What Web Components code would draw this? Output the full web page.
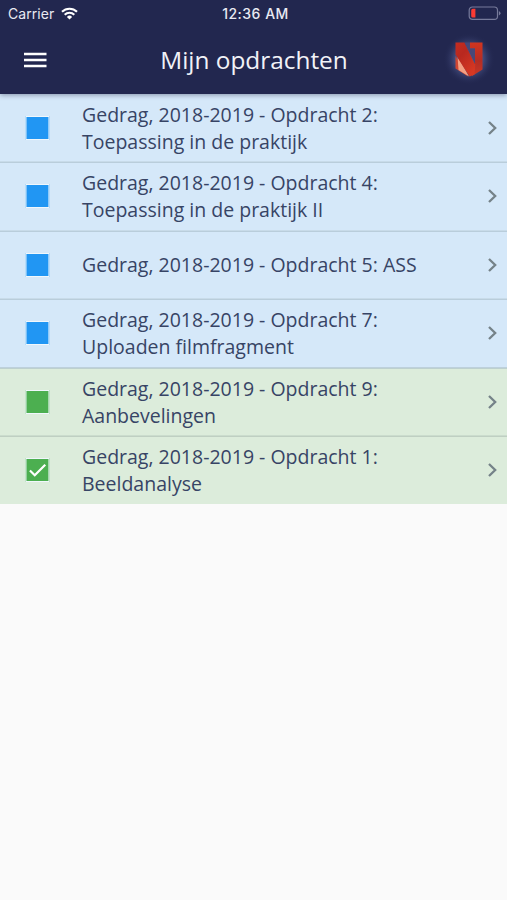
<!DOCTYPE html>
<html lang="nl">
<head>
<meta charset="utf-8">
<title>Mijn opdrachten</title>
<style>
html,body{margin:0;height:100%;background:#fafafa}
</style>
</head>
<body>
<assignments-app></assignments-app>
<script>
const define = (name, html) => {
  const tpl = document.createElement('template');
  tpl.innerHTML = html;
  customElements.define(name, class extends HTMLElement {
    constructor() {
      super();
      this.attachShadow({mode: 'open'}).append(tpl.content.cloneNode(true));
    }
  });
};

define('status-bar', `
<style>
:host{display:grid;grid-template-columns:1fr auto 1fr;align-items:center;height:27px;padding:1px 6px 0 8px;box-sizing:border-box;color:#e9eaf2;font:14px/26px Inter,sans-serif}
.left{display:flex;align-items:center;gap:7px}
.carrier{font-size:14px;letter-spacing:.05px}
.time{font-weight:500;font-size:14px;letter-spacing:.5px;padding-left:2px}
.battery{justify-self:end}
svg{display:block}
.left svg{margin-top:-2px}
.battery{margin-top:-1px}
</style>
<div class="left"><span class="carrier">Carrier</span>
<svg width="17" height="13" viewBox="0 0 17 13" fill="none" stroke="#fff" stroke-width="2.1"><path d="M1 4.8a10.7 10.7 0 0 1 15 0M3.7 7.7a6.8 6.8 0 0 1 9.6 0"/><path d="M8.5 12.5 5.9 9.9a3.7 3.7 0 0 1 5.2 0z" fill="#fff" stroke="none"/></svg></div>
<span class="time">12:36 AM</span>
<svg class="battery" width="33" height="15" viewBox="0 0 33 15"><rect x="1.2" y="1" width="28.3" height="12.4" rx="3.2" fill="none" stroke="#777b9b" stroke-width="1.2"/><path d="M4.8 2.8H7.4v8.8H4.8A1.6 1.6 0 0 1 3.2 10V4.4A1.6 1.6 0 0 1 4.8 2.8z" fill="#fa3a33"/><path d="M30.9 5q1.6.8 1.6 2.2t-1.6 2.2z" fill="#777b9b"/></svg>`);

define('brand-logo', `
<style>:host{display:block;width:66px;height:66px}svg{display:block}</style>
<svg width="66" height="66" viewBox="0 0 66 66">
<defs>
<radialGradient id="halo"><stop offset="0" stop-color="#66719f" stop-opacity=".95"/><stop offset=".5" stop-color="#59649a" stop-opacity=".7"/><stop offset="1" stop-color="#222750" stop-opacity="0"/></radialGradient>
<linearGradient id="band" x1="0" y1="0" x2=".6" y2="1"><stop offset="0" stop-color="#c52c20"/><stop offset=".4" stop-color="#b8281f"/><stop offset="1" stop-color="#d63823"/></linearGradient>
<linearGradient id="side" x1="0" y1="0" x2="0" y2="1"><stop offset="0" stop-color="#d2351f"/><stop offset=".55" stop-color="#b42d24"/><stop offset="1" stop-color="#c93826"/></linearGradient>
</defs>
<circle cx="34" cy="32" r="26" fill="url(#halo)"/>
<path d="M20.5 29 33 49.5 20.5 41.5z" fill="#cf4632"/>
<path d="M22.5 29 34 49.5 23.5 43z" fill="#f3a083"/>
<path d="M35 15.5H47.5V42.5L37 49V36H40V21.5H35z" fill="url(#side)"/>
<path d="M20.5 15.5H29.5L40.3 37.5 39.5 47.5 34.5 49.5 20.5 27.5z" fill="url(#band)"/>
<path d="M29.5 15.5 40 37V21.5H35V15.5z" fill="#474878"/>
</svg>`);

define('app-header', `
<style>
:host{display:block;height:94px;background:#22274f;box-shadow:0 1px 5px rgba(20,25,60,.42);position:relative;z-index:1}
.bar{display:grid;grid-template-columns:94px 1fr 94px;align-items:center;height:66px}
.menu{margin-left:24px;display:block}
h1{margin:0;padding-left:1px;text-align:center;font:400 24.4px/34px "Open Sans",sans-serif;color:#f1f2f7;white-space:nowrap}
brand-logo{margin-left:22px}
</style>
<status-bar></status-bar>
<div class="bar">
<svg class="menu" width="23" height="16" viewBox="0 0 23 16"><path d="M0 2h22.5M0 8h22.5M0 14h22.5" stroke="#fff" stroke-width="2.4"/></svg>
<h1><slot></slot></h1>
<brand-logo></brand-logo>
</div>`);

define('assignment-row', `
<style>
:host{display:grid;grid-template-columns:82px 1fr 20px;align-items:center;height:68.4px;padding-bottom:1.2px;box-sizing:border-box;background:#d5e8f9;border-top:1px solid #b9cddb;box-shadow:0 -1px #c8dbe9;--mark:#2196f3}
:host([state=done]){background:#dcecdb;border-color:#bfcfc2;box-shadow:0 -1px #cbdccd;--mark:#4caf50}
:host([turn]){border-color:#bdd0ce;box-shadow:0 -1px #bdd0dc}
:host(:first-of-type){border-color:transparent;box-shadow:none}
.box{width:22px;height:22px;margin-left:25px;border:1px solid #f0f7fc;background:var(--mark);display:block;transform:translateX(.45px)}
.check{display:none}
:host([checked]) .check{display:block}
.box svg{width:22px;height:22px}
.text{font:400 19.5px/27px "Open Sans",sans-serif;color:#374465;white-space:nowrap}
.chev{display:block}
</style>
<span class="box"><svg class="check" viewBox="0 0 22 22"><path d="M3.5 11.5 8.3 16.3 18.8 5.7" fill="none" stroke="#fff" stroke-width="2.2"/></svg></span>
<div class="text"><slot></slot></div>
<svg class="chev" width="12" height="16" viewBox="0 0 12 16"><path d="M2 2 8.2 8 2 14" fill="none" stroke="#758288" stroke-width="2.3"/></svg>`);

define('assignments-app', `
<style>:host{display:block;min-height:900px;background:#fafafa}</style>
<app-header>Mijn opdrachten</app-header>
<main>
<assignment-row>Gedrag, 2018-2019 - Opdracht 2:<br>Toepassing in de praktijk</assignment-row>
<assignment-row>Gedrag, 2018-2019 - Opdracht 4:<br>Toepassing in de praktijk II</assignment-row>
<assignment-row>Gedrag, 2018-2019 - Opdracht 5: ASS</assignment-row>
<assignment-row>Gedrag, 2018-2019 - Opdracht 7:<br>Uploaden filmfragment</assignment-row>
<assignment-row state="done" turn>Gedrag, 2018-2019 - Opdracht 9:<br>Aanbevelingen</assignment-row>
<assignment-row state="done" checked>Gedrag, 2018-2019 - Opdracht 1:<br>Beeldanalyse</assignment-row>
</main>`);
</script>
</body>
</html>
